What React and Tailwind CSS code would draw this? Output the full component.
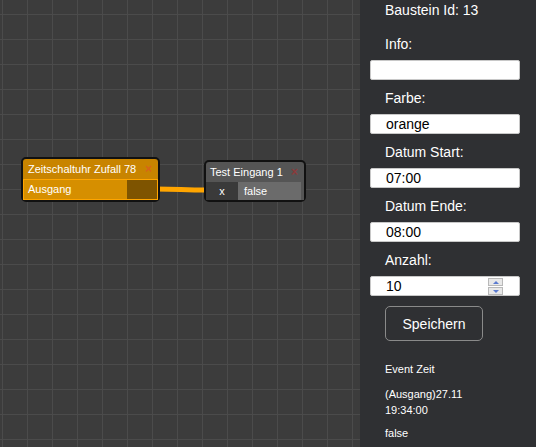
import React from 'react';

const Field = ({ label, value, first, spinner }) => (
  <div>
    <div className={`pl-[25px] h-[16px] ${first ? 'mt-[18px]' : 'mt-[10px]'}`}>{label}</div>
    <div className="relative ml-[10px] mt-[8px] w-[150px] h-[20px] bg-white border border-[#c8c8c8] rounded-[2px] text-black pl-[15px] leading-[18px]">
      {value}
      {spinner && (
        <div className="absolute right-[16px] top-[1px] w-[15px] flex flex-col gap-[1px]">
          <div className="h-[8px] bg-[#e8e8e8] border border-[#b8b8b8] flex items-center justify-center">
            <div className="w-0 h-0 border-l-[3px] border-r-[3px] border-b-[3px] border-l-transparent border-r-transparent border-b-[#5b7bd0]" />
          </div>
          <div className="h-[8px] bg-[#e8e8e8] border border-[#b8b8b8] flex items-center justify-center">
            <div className="w-0 h-0 border-l-[3px] border-r-[3px] border-t-[3px] border-l-transparent border-r-transparent border-t-[#5b7bd0]" />
          </div>
        </div>
      )}
    </div>
  </div>
);

const App = () => {
  return (
    <div className="flex h-screen font-['Liberation_Sans',Arial,sans-serif] overflow-hidden">
      {/* Canvas */}
      <div className="relative flex-1 bg-[#3c3c3c] bg-[linear-gradient(to_right,#4b4b4b_1px,transparent_1px),linear-gradient(to_bottom,#4b4b4b_1px,transparent_1px)] bg-[size:25px_25px] bg-[position:2px_14px]">
        <svg className="absolute left-0 top-0" width="360" height="447">
          <path d="M156 189 C 180 189, 182 190, 208 190" stroke="#ffa500" strokeWidth="5" fill="none" />
        </svg>

        {/* Node 1 */}
        <div className="absolute left-[21px] top-[157px] w-[139px] h-[45px] bg-[#c88400] border-2 border-[#111] rounded-[5px] text-white text-[11px] leading-[13px]">
          <div className="flex items-center justify-between h-[20px] pl-[5px] pr-[6px]">
            <span>Zeitschaltuhr Zufall 78</span>
            <span className="text-[#d8641a] text-[12px] font-bold">×</span>
          </div>
          <div className="flex h-[21px] border border-[#ffa500]">
            <div className="flex-1 bg-[#d68f00] pl-[4px] flex items-center">Ausgang</div>
            <div className="w-[30px] bg-[#7e5400]" />
          </div>
        </div>

        {/* Node 2 */}
        <div className="absolute left-[204px] top-[160px] w-[102px] h-[42px] bg-[#555555] border-2 border-[#111] rounded-[5px] text-white text-[11px] leading-[13px]">
          <div className="flex items-center justify-between h-[20px] pl-[4px] pr-[6px]">
            <span>Test Eingang 1</span>
            <span className="text-[#8a3b3b] text-[12px] font-bold">×</span>
          </div>
          <div className="flex h-[18px]">
            <div className="w-[32px] bg-[#3a3a3a] flex items-center justify-center">x</div>
            <div className="flex-1 bg-[#6b6b6b] pl-[6px] flex items-center">false</div>
            <div className="w-[3px] bg-[#555555]" />
          </div>
        </div>
      </div>

      {/* Sidebar */}
      <aside className="w-[176px] shrink-0 bg-[#2f3033] text-white text-[14px] leading-[16px]">
        <div className="pl-[25px] pt-[2px]">Baustein Id: 13</div>
        <Field label="Info:" value="" first />
        <Field label="Farbe:" value="orange" />
        <Field label="Datum Start:" value="07:00" />
        <Field label="Datum Ende:" value="08:00" />
        <Field label="Anzahl:" value="10" spinner />
        <button className="ml-[25px] mt-[10px] w-[98px] h-[35px] border border-[#8a8a8a] rounded-[5px] text-white text-[14px]">
          Speichern
        </button>
        <div className="pl-[25px] text-[11px] leading-[13px] mt-[22px]">Event Zeit</div>
        <div className="pl-[25px] text-[11px] leading-[16px] mt-[10px]">
          <div>(Ausgang)27.11</div>
          <div>19:34:00</div>
        </div>
        <div className="pl-[25px] text-[11px] leading-[13px] mt-[9px]">false</div>
      </aside>
    </div>
  );
};

export default App;
